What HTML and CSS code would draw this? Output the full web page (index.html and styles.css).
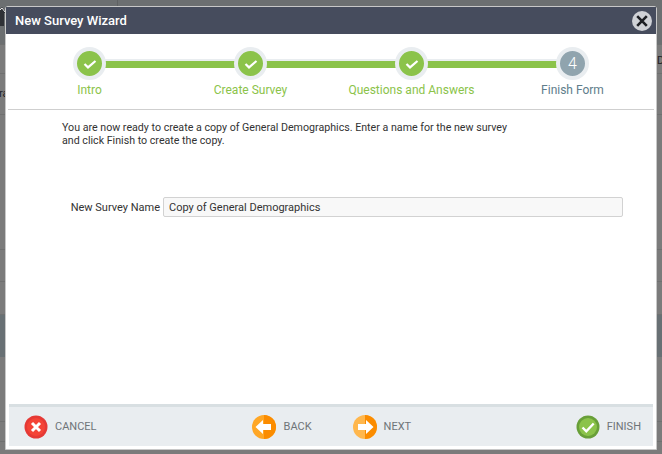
FILE: index.html
```html
<!DOCTYPE html>
<html>
<head>
    <title>New Survey Wizard</title>
    <meta charset="UTF-8">
    <link rel="stylesheet" href="styles.css">
</head>
<body>
    <div class="backdrop">
        <div class="back-row back-head"></div>
        <div class="back-row r29"></div>
        <div class="back-row r41"></div>
        <div class="back-row r135"></div>
        <div class="back-row r32"></div>
        <div class="back-row r33"></div>
        <div class="back-band"></div>
        <div class="back-row r65"></div>
        <div class="back-row r20"></div>
        <span class="back-divider"></span>
        <svg class="back-icon" width="6" height="20" viewBox="0 0 6 20"><path d="M-3 6L2 0l4 5v1H4v13H0V6z" fill="#2f3136"/><path d="M-2 5l4-4 3 4" stroke="#e8e8e8" fill="none"/></svg>
        <span class="back-text left">ra</span>
        <span class="back-text right">D</span>
    </div>
    <div class="dialog">
        <div class="header">
            <h1>New Survey Wizard</h1>
            <span class="close">
                <svg width="22" height="22" viewBox="0 0 22 22"><circle cx="11" cy="11" r="10" fill="#cfd1d6"/><path d="M6.2 6.2l9.6 9.6M15.8 6.2l-9.6 9.6" stroke="#1d1f24" stroke-width="2.6" fill="none"/></svg>
            </span>
        </div>
        <div class="steps">
            <div class="step done">
                <span class="bubble"><svg width="14" height="14" viewBox="0 0 14 14"><path d="M1.5 7l3.5 3.4L12.5 4" stroke="#fff" stroke-width="2.2" fill="none"/></svg></span>
                <span class="step-label">Intro</span>
            </div>
            <div class="step done">
                <span class="bubble"><svg width="14" height="14" viewBox="0 0 14 14"><path d="M1.5 7l3.5 3.4L12.5 4" stroke="#fff" stroke-width="2.2" fill="none"/></svg></span>
                <span class="step-label">Create Survey</span>
            </div>
            <div class="step done">
                <span class="bubble"><svg width="14" height="14" viewBox="0 0 14 14"><path d="M1.5 7l3.5 3.4L12.5 4" stroke="#fff" stroke-width="2.2" fill="none"/></svg></span>
                <span class="step-label">Questions and Answers</span>
            </div>
            <div class="step current">
                <span class="bubble">4</span>
                <span class="step-label">Finish Form</span>
            </div>
        </div>
        <div class="content">
            <p class="intro">You are now ready to create a copy of General Demographics. Enter a name for the new survey<br>and click Finish to create the copy.</p>
            <div class="field">
                <label class="field-label" for="surveyName">New Survey Name</label>
                <input class="field-input" id="surveyName" type="text" value="Copy of General Demographics">
            </div>
        </div>
        <div class="footer">
            <a class="action cancel" href="#">
                <svg width="24" height="24" viewBox="0 0 24 24"><circle cx="12" cy="12" r="11.5" fill="#e53935"/><circle cx="12" cy="12" r="9" fill="#f44336"/><path d="M8 8l8 8M16 8l-8 8" stroke="#fff" stroke-width="3" fill="none"/></svg>
                CANCEL
            </a>
            <a class="action back" href="#">
                <svg width="24" height="24" viewBox="0 0 24 24"><circle cx="12" cy="12" r="12" fill="#ffa726"/><path d="M12 0a12 12 0 0 1 0 24z" fill="#fb8c00"/><path d="M3.5 12L11 5v4h8v6h-8v4z" fill="#fff"/></svg>
                BACK
            </a>
            <a class="action next" href="#">
                <svg width="24" height="24" viewBox="0 0 24 24"><circle cx="12" cy="12" r="12" fill="#ffb74d"/><path d="M12 0a12 12 0 0 1 0 24z" fill="#fb8c00"/><path d="M20.5 12L13 5v4H5v6h8v4z" fill="#fff"/></svg>
                NEXT
            </a>
            <a class="action finish" href="#">
                <svg width="24" height="24" viewBox="0 0 24 24"><circle cx="12" cy="12" r="11.5" fill="#689f38"/><circle cx="12" cy="12" r="9" fill="#8bc34a"/><path d="M6.5 12.5l3.8 3.8 7.4-7.8" stroke="#fff" stroke-width="2.4" fill="none"/></svg>
                FINISH
            </a>
        </div>
    </div>
</body>
</html>
```
FILE: styles.css
```css
html, body {
    margin: 0;
    height: 100%;
    overflow: hidden;
}
body {
    font-family: Roboto, "Liberation Sans", sans-serif;
    color: #333;
    background: #7b7b7b;
}
.backdrop {
    position: absolute;
    top: 0;
    left: 0;
    right: 0;
    bottom: 0;
}
.back-row {
    box-sizing: border-box;
    border-bottom: 1px solid #6f7070;
}
.back-head {
    height: 45px;
    background: #6c6f71;
}
.r29 { height: 29px; }
.r41 { height: 41px; }
.r135 { height: 135px; }
.r32 { height: 32px; }
.r33 { height: 33px; }
.r65 { height: 65px; }
.r20 { height: 20px; }
.back-band {
    height: 42px;
    background: #687074;
}
.back-divider {
    position: absolute;
    top: 0;
    left: 117px;
    width: 1px;
    height: 6px;
    background: #5f6163;
}
.back-icon {
    position: absolute;
    top: 7px;
    left: 0;
}
.back-text {
    position: absolute;
    font-size: 11px;
    line-height: 13px;
    color: #1f2024;
}
.back-text.left {
    top: 87px;
    left: -1px;
}
.back-text.right {
    top: 54px;
    left: 657px;
}
.dialog {
    position: absolute;
    top: 6px;
    left: 5px;
    width: 650px;
    height: 442px;
    display: flex;
    flex-direction: column;
    background: white;
    border: 1px solid #c8c8c8;
    border-radius: 3px 3px 0 0;
}
.header {
    display: flex;
    align-items: center;
    justify-content: space-between;
    height: 27px;
    flex-shrink: 0;
    padding: 0 0 0 9px;
    background: #464c5d;
    color: white;
}
.header h1 {
    margin: 0;
    font-size: 13px;
    font-weight: 500;
}
.close {
    display: block;
    height: 22px;
    margin-right: 3px;
}
.steps {
    display: grid;
    grid-template-columns: repeat(4, 161px);
    justify-content: center;
    height: 75px;
    flex-shrink: 0;
    margin: 0 2px;
    border-bottom: 1px solid #cfcfcf;
}
.step {
    position: relative;
    display: flex;
    flex-direction: column;
    align-items: center;
    padding-top: 13px;
}
.step:not(:last-child)::after {
    content: "";
    position: absolute;
    top: 25px;
    left: 50%;
    width: 100%;
    height: 7px;
    background: #8bc34a;
    border-top: 2px solid #e9edf0;
}
.bubble {
    position: relative;
    z-index: 1;
    display: flex;
    align-items: center;
    justify-content: center;
    width: 25px;
    height: 25px;
    border: 4px solid #e9edf0;
    border-radius: 50%;
    color: white;
    font-size: 16px;
    font-weight: 300;
}
.done .bubble {
    background: #8bc34a;
}
.current .bubble {
    background: #90a4ae;
}
.step-label {
    margin-top: 3px;
    font-size: 12px;
    line-height: 14px;
}
.done .step-label {
    color: #8bc34a;
}
.current .step-label {
    color: #607d8b;
}
.content {
    flex: 1;
    padding: 11px 0 0 56px;
}
.intro {
    margin: 0;
    font-size: 10.67px;
    line-height: 13px;
}
.field {
    display: flex;
    align-items: center;
    margin-top: 50px;
}
.field-label {
    width: 98px;
    text-align: right;
    font-size: 11px;
}
.field-input {
    width: 460px;
    height: 20px;
    box-sizing: border-box;
    margin-left: 3px;
    padding: 0 5px;
    border: 1px solid #d2d2d2;
    border-radius: 2px;
    background: #f8f8f8;
    font-family: inherit;
    font-size: 11px;
    color: #333;
}
.footer {
    display: flex;
    align-items: center;
    height: 39px;
    flex-shrink: 0;
    margin: 0 3px 3px;
    border-top: 3px solid #d8dfe2;
    background: #e9edf0;
}
.action {
    display: flex;
    align-items: center;
    gap: 7px;
    font-size: 11px;
    color: #6f7478;
    text-decoration: none;
}
.cancel {
    margin-left: 15px;
}
.back {
    margin-left: 155px;
    gap: 8px;
}
.next {
    margin-left: 41px;
}
.finish {
    margin-left: auto;
    margin-right: 12px;
}
```
